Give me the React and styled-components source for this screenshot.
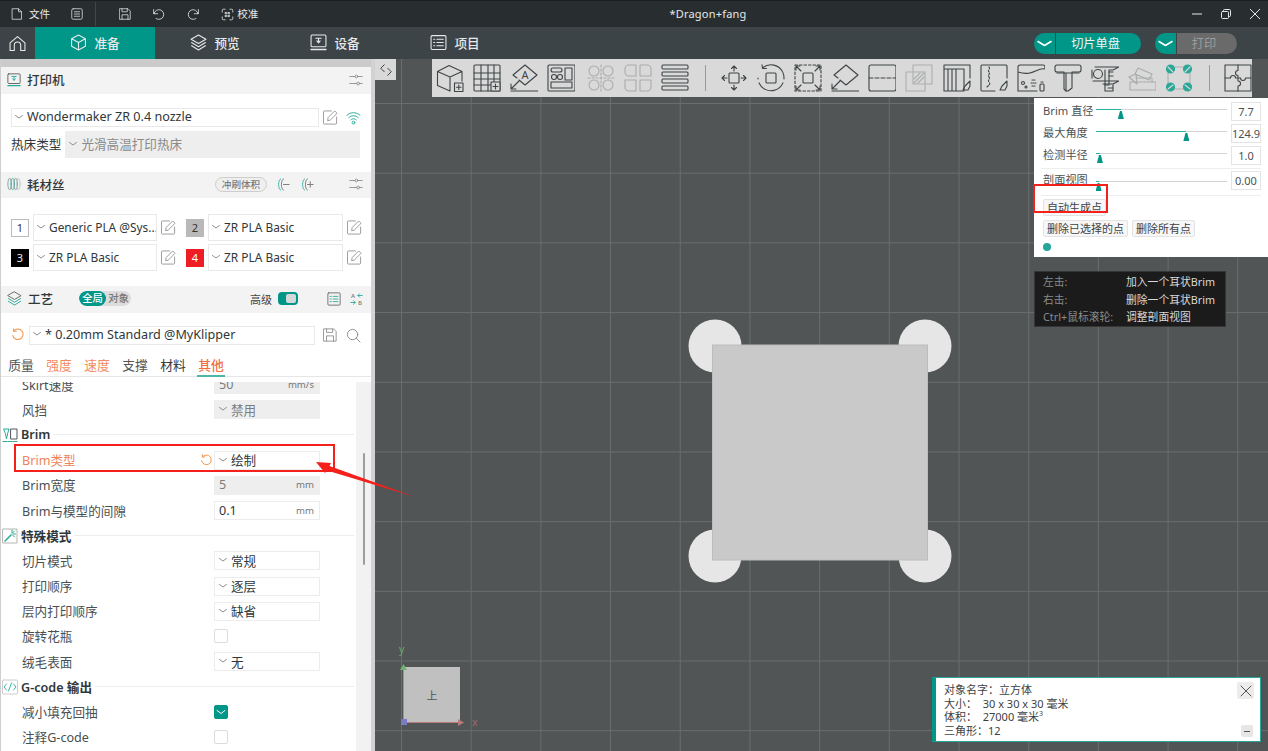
import React from "react";
import styled, { createGlobalStyle } from "styled-components";

const Global = createGlobalStyle`
  html, body { margin: 0; padding: 0; background: #515556; }
  body { font-family: "Noto Sans", "Noto Sans CJK SC", sans-serif; font-size: 12.6px; color: #30373a; }
  * { box-sizing: border-box; }
`;

const Page = styled.div`
  position: relative; width: 1268px; height: 751px; overflow: hidden;
  display: flex; flex-direction: column;
`;

const SvgBase = styled.svg`
  flex: none; display: block; fill: none;
  width: ${p => p.$w}px; height: ${p => p.$h || p.$w}px;
  stroke: ${p => p.$c || "currentColor"};
  stroke-width: ${p => p.$sw || 1};
  stroke-linecap: round; stroke-linejoin: round;
  margin-left: ${p => p.$ml || 0}px;
  opacity: ${p => p.$op || 1};
`;
const Ic = ({ s = 14, h, vb = 16, c, sw, ml, children }) => (
  <SvgBase $w={s} $h={h} $c={c} $sw={sw} $ml={ml} viewBox={`0 0 ${vb} ${h ? (vb * h) / s : vb}`}>{children}</SvgBase>
);

/* ---------- title bar ---------- */
const TitleBar = styled.header`
  height: 27px; flex: none; background: #282e30; border-top: 1px solid #1c2022; color: #e6e8e8;
  display: grid; grid-template-columns: 636px 144px 1fr; align-items: center;
`;
const TitleLeft = styled.div`display: flex; align-items: center; height: 100%;`;
const TitleItem = styled.div`
  display: flex; align-items: center; gap: 6px; font-size: 10.6px; margin-left: ${p => p.$ml}px;
`;
const TitleText = styled.span`margin-left: ${p => p.$ml || 0}px; padding-bottom: 1px;`;
const TitleSep = styled.div`width: 1px; height: 24px; background: #42484a; margin-left: 12px;`;
const DocTitle = styled.div`text-align: center; font-size: 11px; white-space: nowrap; letter-spacing: .2px; padding-bottom: 1px;`;
const WinControls = styled.div`display: flex; justify-content: flex-end; gap: 19px; padding-right: 8px; align-items: center;`;

/* ---------- tab bar ---------- */
const TabBar = styled.nav`height: 32px; flex: none; background: #3d4447; display: flex; align-items: stretch; color: #e8eaea;`;
const HomeBtn = styled.div`width: 35px; display: flex; align-items: center; justify-content: center;`;
const Tab = styled.div`
  width: 120px; display: flex; align-items: center; justify-content: center; gap: 7px;
  font-size: 12.6px; font-weight: 500; padding-bottom: 1px;
  background: ${p => (p.$active ? "#009688" : "transparent")};
`;
const TabActions = styled.div`margin-left: auto; display: flex; align-items: center; gap: 14px; padding-right: 31px;`;
const SplitButton = styled.div`display: flex; height: 21px; width: ${p => p.$w}px; border-radius: 11px; overflow: hidden; font-size: 12.2px;`;
const SplitArrow = styled.div`width: 21px; background: #009688; display: flex; align-items: center; justify-content: center; margin-right: 1px;`;
const SplitLabel = styled.div`
  flex: 1; display: flex; align-items: center; justify-content: center; padding-right: 6px; padding-bottom: 1px;
  background: ${p => (p.$off ? "#6a6a6a" : "#009688")}; color: ${p => (p.$off ? "#9c9c9c" : "#f2f4f4")};
`;

/* ---------- main ---------- */
const Main = styled.div`flex: 1; display: flex; min-height: 0;`;
const Sidebar = styled.aside`
  width: 375px; flex: none; background: #fff; display: flex; flex-direction: column;
  border-left: 1px solid #cfcfcf; border-right: 4px solid #d2d2d2;
`;
const TopStrip = styled.div`height: 8px; flex: none; background: #cbcbcb;`;
const SectionHead = styled.div`
  height: ${p => p.$h || 27}px; flex: none; background: #f3f3f3; display: flex; align-items: center;
  padding-left: 6px; padding-bottom: 2px; font-size: 12.5px; font-weight: 500; color: #30373a; position: relative;
`;
const SectionTitle = styled.span`margin-left: 6px;`;
const HeadEnd = styled.div`
  margin-left: ${p => (p.$ml ? `${p.$ml}px` : "auto")}; display: flex; align-items: center;
  margin-right: ${p => p.$mr || 8}px; gap: ${p => p.$gap || 0}px;
`;
const PrinterBody = styled.div`height: 78px; flex: none; padding: 14px 0 0 10px; display: flex; flex-direction: column; gap: 4px;`;
const Line = styled.div`display: flex; align-items: center; gap: ${p => p.$gap || 4}px;`;
const LineLabel = styled.span`padding-bottom: 2px; flex: none; white-space: nowrap;`;
const Select = styled.div`
  display: flex; align-items: center; gap: 4px; padding: 0 0 2px 3px; min-width: 0;
  height: ${p => p.$h || 19}px; width: ${p => p.$w}px; flex: none; margin-left: ${p => p.$ml || 0}px;
  border: 1px solid ${p => (p.$off ? "#eeeeee" : "#e9e9e9")};
  background: ${p => (p.$off ? "#eeeeee" : "#fff")};
  color: ${p => (p.$off ? "#8a8a8a" : "#30373a")};
  font-size: ${p => p.$fs || 12.6}px; white-space: nowrap; overflow: hidden;
`;
const FlushPill = styled.div`
  width: 52px; height: 15px; border: 1px solid #cdcdcd; border-radius: 8px; background: #efefef; color: #7b7b7b;
  font-size: 9.6px; display: flex; align-items: center; justify-content: center; margin-left: auto;
`;
const FilamentGrid = styled.div`
  height: 88px; flex: none; padding: 16px 0 0 10px; display: grid;
  grid-template-columns: 175px 175px; grid-auto-rows: 27px; row-gap: 3px;
`;
const FilamentCell = styled.div`display: flex; align-items: center; gap: 4px;`;
const Swatch = styled.div`
  width: 18px; height: 18px; flex: none; display: flex; align-items: center; justify-content: center; font-size: 11px;
  background: ${p => p.$bg}; color: ${p => p.$fg}; border: 1px solid ${p => p.$line || p.$bg};
`;
const ScopePill = styled.div`
  width: 52px; height: 15px; margin-left: 26px; border-radius: 8px; background: #dcdcdc; display: flex; align-items: center;
  font-size: 10.4px; color: #777; overflow: hidden;
`;
const ScopeOn = styled.div`width: 27px; height: 100%; background: #009688; color: #fff; border-radius: 8px; text-align: center; line-height: 15px;`;
const ScopeOff = styled.div`flex: 1; text-align: center; line-height: 15px;`;
const AdvLabel = styled.span`font-size: 11px; margin-left: auto; font-weight: 400; color: #444;`;
const Toggle = styled.div`
  width: 20px; height: 13px; margin-left: 6px; background: #009688; border-radius: 4px; padding: 2px 2px 2px 8px;
  &::after { content: ""; display: block; width: 10px; height: 9px; background: #d4d8d8; border-radius: 2px; }
`;
const PresetRow = styled.div`height: 42px; flex: none; display: flex; align-items: center; padding-left: 10px; padding-top: 2px;`;
const HSpace = styled.span`width: ${p => p.$w}px; flex: none;`;
const Tabs = styled.div`
  height: 22px; flex: none; display: flex; gap: 12px; padding-left: 7px; border-bottom: 1px solid #e6e6e6; font-size: 12.8px;
`;
const SubTab = styled.div`
  width: ${p => (p.$on ? 28 : 26)}px; margin-left: ${p => (p.$on ? -1 : 0)}px;
  text-align: center; white-space: nowrap; line-height: 20px;
  color: ${p => (p.$on ? "#f0703f" : p.$warn ? "#f28b63" : p.$dark ? "#3a3a3a" : "#555")};
  font-weight: ${p => (p.$on ? 500 : 400)};
  border-bottom: ${p => (p.$on ? "2px solid #4db6a4" : "none")};
  height: ${p => (p.$on ? 22 : 21)}px;
`;
const ListArea = styled.div`flex: 1; min-height: 0; display: flex; padding-top: 5px;`;
const ListClip = styled.div`flex: 1; min-width: 0; overflow: hidden;`;
const ListInner = styled.div`margin-top: -10px;`;
const ScrollTrack = styled.div`width: 15px; flex: none; background: #f2f2f2; padding-top: 71px; display: flex; justify-content: center;`;
const ScrollThumb = styled.div`width: 2px; height: 112px; background: #9d9d9d; border-radius: 1px; margin-left: 1px;`;
const Row = styled.div`
  height: 25.2px; display: flex; align-items: center; padding-left: 21px; padding-right: 36px;
`;
const RowLabel = styled.div`flex: 1; padding-bottom: 1px; color: ${p => (p.$mod ? "#f0835a" : "#4a5052")}; white-space: nowrap;`;
const Value = styled.div`
  width: 106px; height: 19px; flex: none; display: flex; align-items: center; padding: 0 5px 1px 4px; gap: 4px;
  border: 1px solid ${p => (p.$off ? "#eeeeee" : "#ececec")};
  background: ${p => (p.$off ? "#eeeeee" : "#fff")};
  color: ${p => (p.$off ? "#7d7d7d" : "#30373a")}; white-space: nowrap;
`;
const Unit = styled.span`margin-left: auto; font-size: 9.6px; color: #777;`;
const CheckBox = styled.div`
  width: 14px; height: 14px; flex: none; margin-right: 92px; border-radius: 2px; display: flex; align-items: center; justify-content: center;
  border: 1px solid ${p => (p.$on ? "#009688" : "#dcdcdc")}; background: ${p => (p.$on ? "#009688" : "#fff")};
`;
const GroupHead = styled.div`
  height: 25.2px; display: flex; align-items: center; padding-left: 1px; font-weight: 600; color: #30373a; padding-right: 2px;
`;
const GroupTitle = styled.span`margin-left: 3px; white-space: nowrap; padding-bottom: 1px;`;
const GroupLine = styled.div`flex: 1; height: 1px; background: #eeeeee; margin-left: 3px;`;

/* ---------- canvas ---------- */
const Canvas = styled.section`
  flex: 1; position: relative; overflow: hidden; background-color: #515556;
  background-image:
    linear-gradient(to right, #696d6e 1px, transparent 1px),
    linear-gradient(to bottom, #696d6e 1px, transparent 1px);
  background-size: 69.7px 69.7px;
  background-position: 26px 44px;
`;
const Collapse = styled.div`
  position: absolute; left: 0; top: 0; width: 21px; height: 21px; background: #d9d9d9; color: #3a3a3a;
  display: flex; align-items: center; justify-content: center;
`;
const Toolbar = styled.div`
  position: absolute; left: 57px; top: 0; width: 820px; height: 38px; background: #d9d9d9; color: #3f4446;
  display: flex; align-items: center; padding-left: 4px; gap: 9.1px;
`;
const ToolSep = styled.div`width: 1px; height: 26px; background: #999; flex: none; margin: 0 4.9px 0 6.8px;`;
const ModelSvg = styled.svg`position: absolute; left: 0; top: 0; width: 893px; height: 692px;`;
const BrimPanel = styled.div`
  position: absolute; left: 659px; top: 39px; width: 234px; height: 159px; background: #fff; padding: 4px 7px 0 9px;
  display: flex; flex-direction: column; font-size: 11.2px; color: #4c5254;
`;
const SliderRow = styled.div`height: ${p => p.$h || 22}px; display: flex; align-items: flex-start; flex: none;`;
const SliderLabel = styled.div`width: 53px; flex: none; white-space: nowrap; line-height: 18px;`;
const Track = styled.div`position: relative; width: 131px; height: 1px; background: #d4d4d4; margin-top: ${p => p.$mt || 7}px; flex: none;`;
const TrackFill = styled.div`height: 1px; background: #2ab3a3;`;
const Thumb = styled.div`
  position: absolute; top: 2px; width: 6px; height: 8px; margin-left: -3px; background: #009688;
  clip-path: polygon(35% 0, 65% 0, 100% 100%, 0 100%);
`;
const NumBox = styled.div`
  width: 30px; height: 19px; flex: none; margin-left: 4px; border: 1px solid #e4e4e4; display: flex; align-items: center;
  justify-content: center; color: #4c5254; font-size: 11px; background: #fff;
`;
const PanelRule = styled.div`height: 1px; flex: none; background: #eee; margin: ${p => p.$m};`;
const PanelBtn = styled.div`
  height: 17px; border: 1px solid #e3e3e3; border-radius: 2px; padding: 0 3px 1px; display: flex; align-items: center; background: #f7f7f7;
  white-space: nowrap; font-size: 11px; color: #3d4345;
`;
const BtnRow = styled.div`display: flex; gap: 4px; flex: none; margin-bottom: ${p => p.$mb}px;`;
const HelpDot = styled.div`width: 8px; height: 8px; border-radius: 50%; background: #26a69a; flex: none;`;
const Tip = styled.div`
  position: absolute; left: 659px; top: 212px; width: 192px; height: 56px; background: #1b1b1b; border: 1px solid #363636;
  padding: 1px 8px; font-size: 10.8px; line-height: 17.6px; display: grid; grid-template-columns: 83px 1fr;
`;
const TipKey = styled.div`color: #8a8a8a; white-space: nowrap;`;
const TipVal = styled.div`color: #d8d8d8; white-space: nowrap;`;
const CubeWidget = styled.div`
  position: absolute; left: 28px; top: 608px; width: 57px; height: 56px; background: #c0c0c0; color: #555;
  display: flex; align-items: center; justify-content: center; font-size: 11px;
  border-left: 1px solid #6fb36f; border-bottom: 1px solid #b97a7a;
`;
const Axis = styled.span`
  position: absolute; font-size: 10.5px; color: ${p => p.$c};
  left: ${p => p.$l}px; top: ${p => p.$t}px;
`;
const AxisUp = styled.div`
  position: absolute; left: -4px; top: -3px; width: 7px; height: 6px; background: #6fb36f; clip-path: polygon(50% 0,100% 100%,0 100%);
`;
const AxisRight = styled.div`
  position: absolute; right: -4px; bottom: -4px; width: 6px; height: 7px; background: #b97a7a; clip-path: polygon(0 0,100% 50%,0 100%);
`;
const AxisZ = styled.div`position: absolute; left: -3px; bottom: -3px; width: 6px; height: 6px; background: #7b7bc4;`;
const InfoBox = styled.div`
  position: absolute; left: 557px; top: 618px; width: 329px; height: 65px; background: #fff;
  border: 1px solid #26a69a; border-left: 4px solid #009688; padding: 5px 0 0 8px;
  font-size: 11px; line-height: 13.5px; color: #3c4244;
`;
const InfoClose = styled.div`
  position: absolute; right: 6px; top: 4px; width: 17px; height: 17px; background: #ececec; border-radius: 2px;
  display: flex; align-items: center; justify-content: center; color: #555;
`;
const InfoMin = styled.div`
  position: absolute; right: 7px; bottom: 4px; width: 12px; height: 12px; background: #e6e6e6; border-radius: 2px;
  display: flex; align-items: center; justify-content: center;
  &::after { content: ""; width: 6px; height: 1px; background: #555; }
`;
const Sup = styled.sup`font-size: 7px; line-height: 0;`;

/* ---------- annotations ---------- */
const RedBox = styled.div`
  position: absolute; left: ${p => p.$l}px; top: ${p => p.$t}px; width: ${p => p.$w}px; height: ${p => p.$h}px;
  border: 2px solid #f5201c; pointer-events: none;
`;
const ArrowSvg = styled.svg`position: absolute; left: 300px; top: 450px; width: 130px; height: 60px; pointer-events: none;`;

/* ---------- icons ---------- */
const Chevron = () => <Ic s={8} h={4} vb={8} c="#8f8f8f"><path d="M.5 .5 4 3 7.5 .5" /></Ic>;
const SmallArrow = () => <Ic s={15} h={7} vb={15} c="#fff" sw={1.6}><path d="M1 1.500 7.500 5.500 14 1.500" /></Ic>;
const EditIcon = () => (
  <Ic s={15} c="#979797"><path d="M14.500 7.500V14a1 1 0 0 1-1 1H1.500a1 1 0 0 1-1-1V2a1 1 0 0 1 1-1H9" /><path d="M5 11 5.500 8 12.500 1 15 3.500 8 10.500Z" /></Ic>
);
const SliderIcon = () => (
  <Ic s={14} c="#8a8a8a"><path d="M1 4h6M10 4h5M1 12h8M12 12h3" /><circle cx="8.500" cy="4" r="1.600" /><circle cx="10.500" cy="12" r="1.600" /></Ic>
);
const ResetIcon = ({ s = 14 }) => (
  <Ic s={s} c="#f59342" sw={1.2}><path d="M3.200 3.400A6 6 0 1 1 2 8.500" /><path d="M2.800 .8 3 3.800 6 3.600" /></Ic>
);
const PrinterDev = ({ s = 16, c, accent }) => (
  <Ic s={s} c={c}>
    <rect x="1" y="1" width="14" height="11" rx="1" />
    <path d="M1 14.500h14" stroke={accent || c} strokeWidth="1.400" />
    <path d="M5.500 4h5M8 4v4M6.500 6.500 8 8.500 9.500 6.500" stroke={accent || c} />
  </Ic>
);
const LayersIcon = ({ s = 16, c = "currentColor", accent }) => (
  <Ic s={s} c={c}>
    <path d="M8 1 15 5 8 9 1 5Z" />
    <path d="M1.500 8 8 12 14.500 8" stroke={accent || c} />
    <path d="M1.500 11 8 15 14.500 11" stroke={accent || c} />
  </Ic>
);
const FilamentIcon = () => (
  <Ic s={14} c="#7f9a98"><ellipse cx="3" cy="8" rx="2" ry="6.500" /><ellipse cx="6.500" cy="8" rx="2" ry="6.500" stroke="#3bb3a5" /><ellipse cx="10" cy="8" rx="2" ry="6.500" /><ellipse cx="13" cy="8" rx="2" ry="6.500" stroke="#b6c6c4" /></Ic>
);
const FilAdjust = ({ plus }) => (
  <Ic s={15} c="#777">
    <path d="M6 2C3 3 3 13 6 14" stroke="#3bb3a5" /><path d="M9 2C6 3 6 13 9 14" />
    <path d="M9 8h6" />{plus && <path d="M12 5v6" />}
  </Ic>
);

const TB = ({ op, ml, children }) => <SvgBase $w={28} $sw={1.1} $op={op} $ml={ml} viewBox="0 0 28 28">{children}</SvgBase>;

const tools = [
  <TB key="a"><path d="M1.500 7.500 13 1.500 26 7.500V17M1.500 7.500V21.500L14 27M1.500 7.500 14 13 26 7.500M14 13V27" /><rect x="18.500" y="19" width="8.500" height="8.500" /><path d="M22.800 21v4.500M20.500 23.200h4.500" /></TB>,
  <TB key="b"><rect x="1" y="1" width="26" height="26" rx="1" /><path d="M8 1V27M15 1V27M21 1V18M1 9H27M1 15H27M1 21H18" /><rect x="18" y="18" width="9" height="9" fill="#d9d9d9" /><path d="M22.500 20v5M20 22.500h5" /></TB>,
  <TB key="c"><path d="M15 1 27 11 15 21 9 16M7 14 3 11 15 1" /><text x="15" y="15" fontSize="11" textAnchor="middle" fill="#3f4446" stroke="none">A</text><path d="M1 27H28" /><path d="M1 25 9 17M1 20V25H6" /></TB>,
  <TB key="d"><rect x="1" y="1" width="27" height="26" rx="1" /><rect x="4" y="4" width="11" height="4" rx="2" /><circle cx="7" cy="13" r="2.500" /><circle cx="13" cy="13" r="2.500" /><rect x="18" y="4" width="7" height="12" /><rect x="4" y="18" width="21" height="6" /></TB>,
  <TB key="e" op={0.3} ml={2.5}><circle cx="7" cy="7" r="5" /><circle cx="21" cy="7" r="5" /><circle cx="7" cy="21" r="5" /><circle cx="21" cy="21" r="5" /><path d="M14 1V27M1 14H27" strokeDasharray="2 2" /></TB>,
  <TB key="f" op={0.3}><path d="M12 12H5a4 4 0 0 1-4-4V5a4 4 0 0 1 4-4h7ZM16 1h7a4 4 0 0 1 4 4v7H16ZM12 16H1v7a4 4 0 0 0 4 4h7ZM16 16h11v7a4 4 0 0 1-4 4h-7Z" /></TB>,
  <TB key="g"><rect x="1" y="1" width="26" height="4" rx="1" /><rect x="1" y="8" width="26" height="4" rx="1" /><rect x="1" y="15" width="26" height="4" rx="1" /><rect x="1" y="22" width="26" height="4" rx="1" /></TB>,
  <ToolSep key="s1" />,
  <TB key="h"><rect x="9" y="9" width="10" height="10" rx="1" /><path d="M14 2V7M11.500 4.500 14 2 16.500 4.500M14 21V26M11.500 23.500 14 26 16.500 23.500M2 14H7M4.500 11.500 2 14 4.500 16.500M21 14H26M23.500 11.500 26 14 23.500 16.500" /></TB>,
  <TB key="i"><rect x="9" y="9" width="10" height="10" rx="1" /><path d="M6 3.500A13 13 0 1 1 1 14" strokeDasharray="30 4" /><path d="M5 .8 5.500 4.500 9.500 4.500" /></TB>,
  <TB key="j"><rect x="1" y="1" width="26" height="26" strokeDasharray="2.500 2" /><rect x="9" y="9" width="10" height="10" rx="1" /><path d="M2 2 7 7M2 6V2H6M26 2 21 7M22 2H26V6M2 26 7 21M2 22V26H6M26 26 21 21M22 26H26V22" /></TB>,
  <TB key="k"><path d="M15 1 27 11 15 21 9 16M7 14 3 11 15 1M1 27H28M1 25 9 17M1 20V25H6" /></TB>,
  <TB key="l"><rect x="1" y="1" width="27" height="26" rx="2" /><path d="M1 14H28" strokeDasharray="4 2" /></TB>,
  <TB key="m" op={0.28}><rect x="8" y="1" width="19" height="19" /><rect x="1" y="8" width="19" height="19" /><path d="M9 19 19 9M9 15 15 9M13 19 19 13" /></TB>,
  <TB key="n"><path d="M1 27V1H27V14M1 5H21V27M5 5V27M9 5V27M13 5V27M1 27H21" /><path d="M27 17 22 22 20 26 25 26 27 22Z" /></TB>,
  <TB key="o"><path d="M15 27H2a1 1 0 0 1-1-1V2a1 1 0 0 1 1-1H26a1 1 0 0 1 1 1V14" /><path d="M9 3c2 2-2 3 0 5s-2 3 0 5-2 3 0 5 0 3-2 5" strokeDasharray="2 1.500" /><path d="M27 17 22 22 20 26 25 26 27 22Z" /></TB>,
  <TB key="p"><path d="M1 27V3a2 2 0 0 1 2-2H26a2 2 0 0 1 2 2V5C20 3 16 13 1 8M1 27H20" /><circle cx="6" cy="19" r="1.500" /><circle cx="9" cy="23" r="1" /><path d="M15 16H18M14 19H20M15 22H18" strokeDasharray="1 1" /><rect x="23" y="20" width="4" height="7" rx="1" /><path d="M24 18h2" /></TB>,
  <TB key="q"><path d="M1 3a2 2 0 0 1 2-2H25a2 2 0 0 1 2 2V6a2 2 0 0 1-2 2H18V24L14 27H12L10 25V8H3a2 2 0 0 1-2-2Z" /><path d="M3 9H25M12 9V27" /></TB>,
  <TB key="r"><path d="M4 3H28L22 6H18V21H14V6" /><circle cx="7" cy="10" r="4.500" /><path d="M1 6V14M2 17H28L22 20H12M14 21V27H22V21M17 24H22" /><path d="M18 8H22M18 12H22" /></TB>,
  <TB key="s" op={0.3}><path d="M10 4 24 10 21 16 7 10ZM8 10 1 13 9 20ZM2 18H28V26H2Z" /><path d="M8 14H24V18" strokeDasharray="2 1" /></TB>,
  <TB key="t"><rect x="3" y="3" width="22" height="22" stroke="#b0b0b0" /><g fill="#2aa897" stroke="#2aa897"><circle cx="5.500" cy="5" r="4" /><circle cx="22.500" cy="5" r="4" /><circle cx="5.500" cy="23" r="4" /><circle cx="22.500" cy="23" r="4" /></g><path d="M3 3 8 8M25 3 20 8M3 25 8 21M25 25 20 21" stroke="#d9d9d9" /></TB>,
  <ToolSep key="s2" />,
  <TB key="u"><rect x="1" y="1" width="26" height="26" /><path d="M14 1V6.500a2.500 2.500 0 0 0 0 5V17a2.500 2.500 0 0 1 0 5V27" /><path d="M1 14H6.500a2.500 2.500 0 0 1 5 0H16.500a2.500 2.500 0 0 0 5 0H27" /></TB>,
];

const G = ({ children }) => <Ic s={16} c="#3bb3a5">{children}</Ic>;

export default function App() {
  return (
    <Page>
      <Global />
      <TitleBar>
        <TitleLeft>
          <TitleItem $ml={11}>
            <Ic s={12} c="#e6e8e8"><path d="M2 1h8l4 4v10H2ZM10 1v4h4" /></Ic>
            <TitleText>文件</TitleText>
          </TitleItem>
          <TitleItem $ml={21}>
            <Ic s={12} c="#e6e8e8"><rect x="1" y="1" width="14" height="14" rx="2" /><path d="M4.500 5h7M4.500 8h7M4.500 11h7" /></Ic>
          </TitleItem>
          <TitleSep />
          <TitleItem $ml={23}>
            <Ic s={12} c="#e6e8e8"><path d="M1 1h11l3 3v11H1ZM4 1v4h7V1M4 15V9h8v6" /></Ic>
          </TitleItem>
          <TitleItem $ml={21}>
            <Ic s={13} c="#e6e8e8"><path d="M2.500 7A6 6 0 1 1 5 13M2 2v5h5" /></Ic>
          </TitleItem>
          <TitleItem $ml={22}>
            <Ic s={13} c="#e6e8e8"><path d="M13.500 7A6 6 0 1 0 11 13M14 2v5H9" /></Ic>
          </TitleItem>
          <TitleItem $ml={21}>
            <Ic s={13} c="#e6e8e8"><path d="M5 1.500H3A1.500 1.500 0 0 0 1.500 3V5M11 1.500h2A1.500 1.500 0 0 1 14.500 3V5M5 14.500H3A1.500 1.500 0 0 1 1.500 13V11M11 14.500h2a1.500 1.500 0 0 0 1.500-1.500V11" /><rect x="5.500" y="5.500" width="1.500" height="1.500" /><rect x="9" y="5.500" width="1.500" height="1.500" /><rect x="5.500" y="9" width="1.500" height="1.500" /><rect x="9" y="9" width="1.500" height="1.500" /></Ic>
            <TitleText $ml={-3}>校准</TitleText>
          </TitleItem>
        </TitleLeft>
        <DocTitle>*Dragon+fang</DocTitle>
        <WinControls>
          <Ic s={10} vb={10}><path d="M0 5H10" /></Ic>
          <Ic s={10} vb={10}><rect x=".5" y="2.500" width="7" height="7" rx="1" /><path d="M2.500 2.500V1.500a1 1 0 0 1 1-1H8.500a1 1 0 0 1 1 1V6.500a1 1 0 0 1-1 1H7.500" /></Ic>
          <Ic s={10} vb={10}><path d="M0 0 10 10M10 0 0 10" /></Ic>
        </WinControls>
      </TitleBar>

      <TabBar>
        <HomeBtn>
          <Ic s={17}><path d="M1 7.500 8 1.500 15 7.500V14.500H11V9.500a3 3 0 0 0-6 0V14.500H1Z" /></Ic>
        </HomeBtn>
        <Tab $active><Ic s={17}><path d="M8 1 14.500 4.500V11.500L8 15 1.500 11.500V4.500ZM1.500 4.500 8 8 14.500 4.500M8 8V15" /></Ic>准备</Tab>
        <Tab><LayersIcon s={17} />预览</Tab>
        <Tab><PrinterDev s={17} c="#e8eaea" />设备</Tab>
        <Tab><Ic s={17}><rect x="1" y="1.500" width="14" height="13" rx="1" /><path d="M3.500 5H4.500M3.500 8H4.500M3.500 11H4.500M6.500 5H12.500M6.500 8H12.500M6.500 11H12.500" /></Ic>项目</Tab>
        <TabActions>
          <SplitButton $w={107}><SplitArrow><SmallArrow /></SplitArrow><SplitLabel>切片单盘</SplitLabel></SplitButton>
          <SplitButton $w={82}><SplitArrow><SmallArrow /></SplitArrow><SplitLabel $off>打印</SplitLabel></SplitButton>
        </TabActions>
      </TabBar>

      <Main>
        <Sidebar>
          <TopStrip />
          <SectionHead>
            <PrinterDev s={14} c="#555" accent="#2aa897" />
            <SectionTitle>打印机</SectionTitle>
            <HeadEnd><SliderIcon /></HeadEnd>
          </SectionHead>
          <PrinterBody>
            <Line>
              <Select $w={308}><Chevron />Wondermaker ZR 0.4 nozzle</Select>
              <EditIcon />
              <Ic s={15} c="#2aa897" ml={4}><path d="M1 5.500a10 10 0 0 1 14 0M3 8a7 7 0 0 1 10 0M5 10.500a4 4 0 0 1 6 0" /><circle cx="8" cy="13.500" r="1.500" /></Ic>
            </Line>
            <Line $gap={4}>
              <LineLabel>热床类型</LineLabel>
              <Select $w={295} $h={27} $off><Chevron />光滑高温打印热床</Select>
            </Line>
          </PrinterBody>

          <SectionHead $h={26}>
            <FilamentIcon />
            <SectionTitle>耗材丝</SectionTitle>
            <FlushPill>冲刷体积</FlushPill>
            <HeadEnd $ml={8} $gap={9}>
              <FilAdjust /><FilAdjust plus />
              <HSpace $w={17} /><SliderIcon />
            </HeadEnd>
          </SectionHead>
          <FilamentGrid>
            <FilamentCell><Swatch $bg="#fff" $fg="#333" $line="#bbb">1</Swatch><Select $w={124} $h={27} $fs={11.9}><Chevron />Generic PLA @Sys...</Select><EditIcon /></FilamentCell>
            <FilamentCell><Swatch $bg="#b9b9b9" $fg="#333">2</Swatch><Select $w={135} $h={27} $fs={11.9}><Chevron />ZR PLA Basic</Select><EditIcon /></FilamentCell>
            <FilamentCell><Swatch $bg="#000" $fg="#eee">3</Swatch><Select $w={124} $h={27} $fs={11.9}><Chevron />ZR PLA Basic</Select><EditIcon /></FilamentCell>
            <FilamentCell><Swatch $bg="#ee1c25" $fg="#fff">4</Swatch><Select $w={135} $h={27} $fs={11.9}><Chevron />ZR PLA Basic</Select><EditIcon /></FilamentCell>
          </FilamentGrid>

          <SectionHead>
            <LayersIcon s={15} c="#666" accent="#2aa897" />
            <SectionTitle>工艺</SectionTitle>
            <ScopePill><ScopeOn>全局</ScopeOn><ScopeOff>对象</ScopeOff></ScopePill>
            <AdvLabel>高级</AdvLabel>
            <Toggle />
            <HeadEnd $ml={29} $gap={9} $mr={7}>
              <Ic s={14} c="#666"><rect x="1" y="1" width="14" height="14" rx="1" /><path d="M3.500 5H5M3.500 8H5M3.500 11H5" stroke="#2aa897" /><path d="M7 5H12.500M7 8H12.500M7 11H12.500" stroke="#2aa897" /></Ic>
              <Ic s={14} c="#2aa897"><text x="1" y="7" fontSize="7" fill="#777" stroke="none">A</text><text x="9" y="15" fontSize="7" fill="#777" stroke="none">B</text><path d="M9 4h5M11 2 9 4 11 6M1 12h5M4 10 6 12 4 14" /></Ic>
            </HeadEnd>
          </SectionHead>
          <PresetRow>
            <ResetIcon />
            <Select $w={286} $h={19} $ml={4}><Chevron />* 0.20mm Standard @MyKlipper</Select>
            <HSpace $w={8} />
            <Ic s={14} c="#8b8b8b"><path d="M1 1h11l3 3v11H1ZM4 1v4h7V1M4 15V9h8v6" /></Ic>
            <Ic s={15} c="#8b8b8b" ml={9}><circle cx="7" cy="7" r="5.500" /><path d="M11 11 15 15" /></Ic>
          </PresetRow>
          <Tabs>
            <SubTab>质量</SubTab>
            <SubTab $warn>强度</SubTab>
            <SubTab $warn>速度</SubTab>
            <SubTab>支撑</SubTab>
            <SubTab $dark>材料</SubTab>
            <SubTab $on>其他</SubTab>
          </Tabs>
          <ListArea>
            <ListClip>
              <ListInner>
                <Row><RowLabel>Skirt速度</RowLabel><Value $off>50<Unit>mm/s</Unit></Value></Row>
                <Row><RowLabel>风挡</RowLabel><Value $off><Chevron />禁用</Value></Row>
                <GroupHead>
                  <Ic s={16} c="#555"><path d="M1 14.500H15" stroke="#2aa897" strokeDasharray="1.500 1" /><path d="M2 2H7L5.500 7 4.500 12 3.500 7Z" stroke="#2aa897" /><rect x="9" y="2" width="6" height="10" /></Ic>
                  <GroupTitle>Brim</GroupTitle><GroupLine />
                </GroupHead>
                <Row><RowLabel $mod>Brim类型</RowLabel><ResetIcon s={13} /><HSpace $w={1} /><Value><Chevron />绘制</Value></Row>
                <Row><RowLabel>Brim宽度</RowLabel><Value $off>5<Unit>mm</Unit></Value></Row>
                <Row><RowLabel>Brim与模型的间隙</RowLabel><Value>0.1<Unit>mm</Unit></Value></Row>
                <GroupHead>
                  <Ic s={16} c="#b4b4b4"><rect x="1" y="1" width="14" height="14" /><path d="M3 13 9 7" stroke="#2aa897" strokeWidth="1.500" /><path d="M10 2V5M12.500 3 10.500 5M13.500 6H11M12.500 9 10.500 7" stroke="#2aa897" /></Ic>
                  <GroupTitle>特殊模式</GroupTitle><GroupLine />
                </GroupHead>
                <Row><RowLabel>切片模式</RowLabel><Value><Chevron />常规</Value></Row>
                <Row><RowLabel>打印顺序</RowLabel><Value><Chevron />逐层</Value></Row>
                <Row><RowLabel>层内打印顺序</RowLabel><Value><Chevron />缺省</Value></Row>
                <Row><RowLabel>旋转花瓶</RowLabel><CheckBox /></Row>
                <Row><RowLabel>绒毛表面</RowLabel><Value><Chevron />无</Value></Row>
                <GroupHead>
                  <G><rect x=".5" y="1" width="15" height="14" rx="1" stroke="#ccc" /><path d="M4.500 5 2 8 4.500 11M11.500 5 14 8 11.500 11M9.500 4 6.500 12" /></G>
                  <GroupTitle>G-code 输出</GroupTitle><GroupLine />
                </GroupHead>
                <Row><RowLabel>减小填充回抽</RowLabel><CheckBox $on><Ic s={10} vb={10} c="#fff"><path d="M1 3.500 5 6.500 9 3.500" /></Ic></CheckBox></Row>
                <Row><RowLabel>注释G-code</RowLabel><CheckBox /></Row>
              </ListInner>
            </ListClip>
            <ScrollTrack><ScrollThumb /></ScrollTrack>
          </ListArea>
        </Sidebar>

        <Canvas>
          <ModelSvg viewBox="0 0 893 692">
            <g fill="#e6e6e6">
              <circle cx="340" cy="287" r="26.500" />
              <circle cx="550" cy="287" r="26.500" />
              <circle cx="340" cy="497" r="26.500" />
              <circle cx="550" cy="497" r="26.500" />
            </g>
            <rect x="337.500" y="286" width="215" height="215" fill="#c9c9c9" stroke="#bcbcbc" />
          </ModelSvg>
          <Collapse><Ic s={14} sw={1.1}><path d="M6 2 2 6 6 10M10 6 14 10 10 14" /></Ic></Collapse>
          <Toolbar>{tools}</Toolbar>
          <BrimPanel>
            <SliderRow>
              <SliderLabel>Brim 直径</SliderLabel>
              <Track><TrackFill style={{ width: "19%" }} /><Thumb style={{ left: "19%" }} /></Track>
              <NumBox>7.7</NumBox>
            </SliderRow>
            <SliderRow>
              <SliderLabel>最大角度</SliderLabel>
              <Track><TrackFill style={{ width: "69%" }} /><Thumb style={{ left: "69%" }} /></Track>
              <NumBox>124.9</NumBox>
            </SliderRow>
            <SliderRow>
              <SliderLabel>检测半径</SliderLabel>
              <Track><TrackFill style={{ width: "3%" }} /><Thumb style={{ left: "3%" }} /></Track>
              <NumBox>1.0</NumBox>
            </SliderRow>
            <PanelRule $m="0 0 2px -2px" />
            <SliderRow $h={24}>
              <SliderLabel>剖面视图</SliderLabel>
              <Track $mt={10}><TrackFill style={{ width: "2%" }} /><Thumb style={{ left: "2%" }} /></Track>
              <NumBox>0.00</NumBox>
            </SliderRow>
            <PanelRule $m="0 0 3px -2px" />
            <BtnRow $mb={4}><PanelBtn>自动生成点</PanelBtn></BtnRow>
            <BtnRow $mb={6}><PanelBtn>删除已选择的点</PanelBtn><PanelBtn>删除所有点</PanelBtn></BtnRow>
            <HelpDot />
          </BrimPanel>
          <Tip>
            <TipKey>左击:</TipKey><TipVal>加入一个耳状Brim</TipVal>
            <TipKey>右击:</TipKey><TipVal>删除一个耳状Brim</TipVal>
            <TipKey>Ctrl+鼠标滚轮:</TipKey><TipVal>调整剖面视图</TipVal>
          </Tip>
          <CubeWidget>
            上
            <AxisUp /><AxisRight /><AxisZ />
            <Axis $c="#6fa56f" $l={-5} $t={-25}>y</Axis>
            <Axis $c="#a06a6a" $l={68} $t={48}>x</Axis>
          </CubeWidget>
          <InfoBox>
            <div>对象名字：立方体</div>
            <div>大小：&nbsp;&nbsp;30 x 30 x 30 毫米</div>
            <div>体积：&nbsp;&nbsp;27000 毫米<Sup>3</Sup></div>
            <div>三角形：12</div>
            <InfoClose><Ic s={12} vb={12}><path d="M1 1 11 11M11 1 1 11" /></Ic></InfoClose>
            <InfoMin />
          </InfoBox>
        </Canvas>
      </Main>

      <RedBox $l={14} $t={444} $w={321} $h={28} />
      <RedBox $l={1033} $t={184} $w={75} $h={29} />
      <ArrowSvg viewBox="300 450 130 60">
        <polygon points="316,462 331,463 329.500,466 415,497 327,470.500 325,473" fill="#f5201c" />
      </ArrowSvg>
    </Page>
  );
}
